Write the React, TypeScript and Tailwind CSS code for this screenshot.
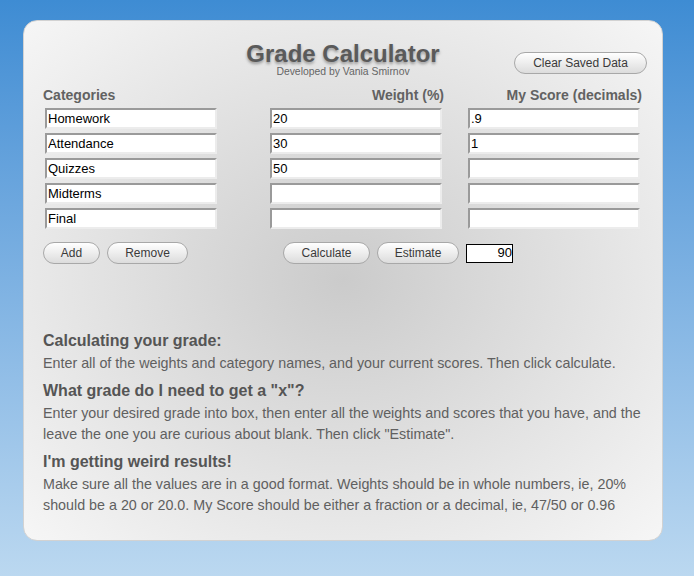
import React, { useState } from "react";

const rows = [
  { name: "Homework", weight: "20", score: ".9" },
  { name: "Attendance", weight: "30", score: "1" },
  { name: "Quizzes", weight: "50", score: "" },
  { name: "Midterms", weight: "", score: "" },
  { name: "Final", weight: "", score: "" },
];

const inputCls =
  "block mx-[2px] w-[172px] h-[21px] bg-white border-2 border-t-[#9a9a9a] border-l-[#9a9a9a] border-b-[#ececec] border-r-[#ececec] px-[1px] text-[13px] leading-[15px] text-black outline-none";

const btnCls =
  "h-[22px] rounded-full border border-[#a8a8a8] bg-linear-to-b from-white to-[#dcdcdc] text-[12px] text-[#3a3a3a] text-center";

const App = () => {
  const [goal, setGoal] = useState("90");

  return (
    <div
      className="min-h-screen h-[576px] bg-linear-to-b from-[#3e8cd3] to-[#bbd8f0] pt-[20px] pl-[23px]"
      style={{ fontFamily: '"Liberation Sans", Arial, sans-serif' }}
    >
      <div className="w-[640px] h-[521px] rounded-[14px] border border-[#d2d2d2] bg-[radial-gradient(ellipse_at_center,#cbcbcb_0%,#f6f6f6_100%)]">
        {/* header */}
        <div className="grid grid-cols-[1fr_auto_1fr] items-start px-[15px] pt-[21px]">
          <div />
          <div className="flex flex-col items-center">
            <h1 className="text-[24px] leading-[24px] font-bold text-[#5a5a5a] [text-shadow:0_2px_3px_rgba(0,0,0,0.35)]">
              Grade Calculator
            </h1>
            <p className="text-[10.4px] leading-[12px] text-[#666]">Developed by Vania Smirnov</p>
          </div>
          <div className="flex justify-end">
            <button className={`${btnCls} w-[133px] mt-[10px]`}>Clear Saved Data</button>
          </div>
        </div>

        {/* table */}
        <div className="px-[19px] mt-[9px]">
          <div className="flex text-[14px] leading-[16px] font-bold text-[#626262]">
            <div className="w-[176px]">Categories</div>
            <div className="w-[175px] ml-[50px] text-right">Weight (%)</div>
            <div className="w-[175px] ml-[23px] text-right">My Score (decimals)</div>
          </div>

          <div className="flex flex-col gap-[4px] mt-[5px]">
            {rows.map((r, i) => (
              <div key={i} className="flex">
                <div className="w-[176px]">
                  <input className={inputCls} defaultValue={r.name} />
                </div>
                <div className="w-[175px] ml-[50px] flex justify-end">
                  <input className={inputCls} defaultValue={r.weight} />
                </div>
                <div className="w-[175px] ml-[23px] flex justify-end">
                  <input className={inputCls} defaultValue={r.score} />
                </div>
              </div>
            ))}
          </div>

          <div className="flex items-center mt-[13px]">
            <button className={`${btnCls} w-[57px]`}>Add</button>
            <button className={`${btnCls} w-[81px] ml-[7px]`}>Remove</button>
            <button className={`${btnCls} w-[87px] ml-[95px]`}>Calculate</button>
            <button className={`${btnCls} w-[82px] ml-[7px]`}>Estimate</button>
            <input
              value={goal}
              onChange={(e) => setGoal(e.target.value)}
              className="block ml-[7px] w-[47px] h-[19px] bg-white border border-black text-right pr-0 text-[13px] text-black outline-none"
            />
          </div>

          {/* help */}
          <div className="mt-[67px]">
            <h3 className="text-[16px] leading-[20px] font-bold text-[#555] mb-[2px]">Calculating your grade:</h3>
            <p className="text-[14.3px] leading-[21px] text-[#606060] mb-[7px]">
              Enter all of the weights and category names, and your current scores. Then click calculate.
            </p>
            <h3 className="text-[16px] leading-[20px] font-bold text-[#555] mb-[2px]">What grade do I need to get a "x"?</h3>
            <p className="text-[14.3px] leading-[21px] text-[#606060] mb-[7px]">
              Enter your desired grade into box, then enter all the weights and scores that you have, and the leave the
              one you are curious about blank. Then click "Estimate".
            </p>
            <h3 className="text-[16px] leading-[20px] font-bold text-[#555] mb-[2px]">I'm getting weird results!</h3>
            <p className="text-[14.3px] leading-[21px] text-[#606060]">
              Make sure all the values are in a good format. Weights should be in whole numbers, ie, 20% should be a 20
              or 20.0. My Score should be either a fraction or a decimal, ie, 47/50 or 0.96
            </p>
          </div>
        </div>
      </div>
    </div>
  );
};

export default App;
